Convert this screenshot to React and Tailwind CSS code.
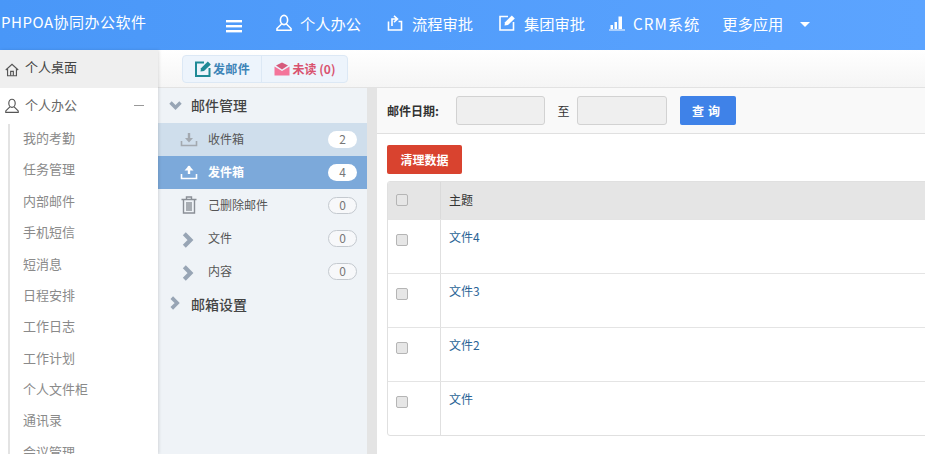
import React from "react";

const F = { fontFamily: '"Noto Sans CJK SC", "Open Sans", sans-serif' };

const Ic = ({ children, className = "", w = 18, h = 18, sw = 1.6 }) => (
  <svg width={w} height={h} viewBox="0 0 18 18" fill="none" stroke="currentColor" strokeWidth={sw} className={"shrink-0 " + className}>
    {children}
  </svg>
);
const User = (p) => (
  <Ic {...p}>
    <ellipse cx="9" cy="6" rx="3.6" ry="4.6" />
    <path d="M6.6 10 L2 14.5 V16.2 H16 V14.5 L11.4 10" />
  </Ic>
);
const Flow = (p) => (
  <Ic {...p}>
    <path d="M2.5 7.5 V16 H15.5 V7.5 H12.5" />
    <path d="M6 12 V5 H11 M8 1.8 L11.5 5 L8 8.2" />
  </Ic>
);
const Edit = (p) => (
  <Ic {...p}>
    <path d="M10 2.5 H2 V16 H15.5 V8" />
    <path d="M6.5 11.5 L7 8.2 L13.8 1.5 L16.8 4.4 L10 11 Z" fill="currentColor" stroke="none" />
  </Ic>
);
const Bars = (p) => (
  <Ic {...p} sw={0}>
    <path d="M1 15.5 H17 V16.5 H1 Z M2.5 11 H5 V15 H2.5 Z M6.5 8 H9 V15 H6.5 Z M10.5 2.5 H14 V15 H10.5 Z" fill="currentColor" />
  </Ic>
);
const Home = (p) => (
  <Ic {...p} sw={1.3}>
    <path d="M2 9 L9 2.5 L16 9 M4 8 V15.5 H14 V8" />
    <path d="M7.5 15.5 V10.5 H10.5 V15.5" />
  </Ic>
);
const Chev = ({ down, size = 13, className = "" }) => (
  <svg width={size} height={size} viewBox="0 0 13 13" className={"shrink-0 " + className} fill="none" stroke="#98a5b5" strokeWidth="3.4">
    {down ? <path d="M1.5 3.5 L6.5 8.5 L11.5 3.5" /> : <path d="M3.5 1.5 L8.5 6.5 L3.5 11.5" />}
  </svg>
);
const Tray = ({ up, color }) => (
  <svg width="18" height="16" viewBox="0 0 18 16" className="shrink-0" fill="none" stroke={color} strokeWidth="1.6">
    <path d="M1.5 10 V14.5 H16.5 V10" />
    <path d="M9 2 V10" strokeWidth="2.4" />
    {up ? <path d="M4.5 6.5 L9 1.5 L13.5 6.5 Z" fill={color} stroke="none" /> : <path d="M5 7 L9 11.5 L13 7 Z" fill={color} stroke="none" />}
  </svg>
);
const Trash = () => (
  <svg width="16" height="18" viewBox="0 0 16 18" className="shrink-0" fill="none" stroke="#8a8f96" strokeWidth="1.4">
    <path d="M0.5 3.5 H15.5 M5.5 3 V1 H10.5 V3 M2.5 4 V17 H13.5 V4 M6 6 V15 M8 6 V15 M10 6 V15" />
  </svg>
);

const navItems = [
  [User, "个人办公", "mr-[25px]", "gap-[7px]", ""],
  [Flow, "流程审批", "mr-[25px]", "gap-[8px]", ""],
  [Edit, "集团审批", "mr-[23px]", "gap-[8px]", ""],
  [Bars, "CRM系统", "mr-[22px]", "gap-[7px]", "tracking-[1px]"],
];
const subItems = ["我的考勤", "任务管理", "内部邮件", "手机短信", "短消息", "日程安排", "工作日志", "工作计划", "个人文件柜", "通讯录", "会议管理"];

const Badge = ({ n, strong }) => (
  <span
    className={
      "w-[29px] h-[17px] rounded-full flex items-center justify-center text-[12px] leading-none text-[#777] " +
      (strong ? "bg-white" : "border border-[#c4c9cf] bg-[#f7f8fa]")
    }
  >
    {n}
  </span>
);

const MailRow = ({ icon, label, n, cls = "", labelCls = "text-[#555]", strong }) => (
  <div className={"h-[33px] flex items-center pl-[22px] pr-[10px] pb-[1px] " + cls}>
    <span className="w-[28px] flex justify-start">{icon}</span>
    <span className={"flex-1 text-[12px] " + labelCls}>{label}</span>
    <Badge n={n} strong={strong} />
  </div>
);

const Box = () => <span className="block w-[12px] h-[12px] rounded-[2px] border border-[#b5b5b5] bg-[#e6e6e6]" />;

const rows = ["文件4", "文件3", "文件2", "文件"];

export default function App() {
  return (
    <div className="w-[925px] h-[454px] overflow-hidden flex flex-col bg-white" style={F}>
      <header className="h-[50px] shrink-0 flex items-center text-white bg-gradient-to-r from-[#4997f8] to-[#5ca4ff]">
        <div className="w-[226px] pl-[1px] pb-[5px] text-[15px] tracking-[0.5px] whitespace-nowrap">PHPOA协同办公软件</div>
        <svg width="16" height="13" viewBox="0 0 16 13" className="mt-[3px] shrink-0 mr-[33px]" fill="white">
          <rect y="0" width="16" height="2.4" />
          <rect y="5" width="16" height="2.4" />
          <rect y="10" width="16" height="2.4" />
        </svg>
        {navItems.map(([I, t, mr, gap, tr]) => (
          <div key={t} className={"flex items-center text-[15.25px] pb-[2px] " + mr + " " + gap}>
            <I className="text-white -mt-[3px]" />
            <span className={"-mt-[2px] " + tr}>{t}</span>
          </div>
        ))}
        <span className="text-[15.25px] mr-[17px] pb-[4px]">更多应用</span>
        <span className="w-0 h-0 border-x-[5px] border-x-transparent border-t-[5px] border-t-white mb-[2px]" />
      </header>

      <div className="flex flex-1 min-h-0">
        <aside className="w-[158px] shrink-0 bg-white shadow-[1px_0_3px_rgba(0,0,0,0.12)] z-10 overflow-hidden">
          <div className="h-[38px] bg-[#efefef] flex items-center pl-[4px] gap-[5px] text-[13px] text-[#444]">
            <Home className="text-[#555] mt-[1px]" w={16} h={16} />
            <span className="pb-[4px]">个人桌面</span>
          </div>
          <div className="h-[35px] flex items-center pl-[4px] pr-[14px] gap-[5px] text-[13px] text-[#666]">
            <User className="text-[#555]" w={16} h={16} sw={1.3} />
            <span className="flex-1 pb-[2px]">个人办公</span>
            <span className="w-[10px] h-px bg-[#999]" />
          </div>
          <ul className="ml-[8px] border-l-2 border-[#e3e3e3] pl-[13px] mt-[1px]">
            {subItems.map((s) => (
              <li key={s} className="h-[31.4px] flex items-center pb-[4px] text-[13px] text-[#8a8a8a]">
                {s}
              </li>
            ))}
          </ul>
        </aside>

        <main className="flex-1 min-w-0 flex flex-col">
          <div className="h-[38px] shrink-0 bg-gradient-to-b from-white to-[#f5f5f5] border-b border-[#e2e2e2] pl-[24px] pt-[5px]">
            <div className="inline-flex h-[28px] rounded-[4px] border border-[#dce8f5] bg-[#edf4fc] text-[12px] font-bold">
              <div className="w-[79px] flex items-center justify-center gap-[1px] border-r border-[#dce8f5] text-[#3d85b8]">
                <Edit className="text-[#1f8a96]" w={18} h={18} sw={2} />
                <span className="tracking-[0.3px]">发邮件</span>
              </div>
              <div className="w-[85px] flex items-center justify-center gap-[3px] text-[#d9536f]">
                <svg width="16" height="14" viewBox="0 0 16 14" className="shrink-0">
                  <path d="M0.5 4.5 L8 9 L15.5 4.5 V13.5 H0.5 Z" fill="#f4749a" />
                  <path d="M2 3.5 L8 0.5 L14 3.5 L8 7.5 Z" fill="#d65a7c" />
                </svg>
                未读 (0)
              </div>
            </div>
          </div>

          <div className="flex flex-1 min-h-0">
            <section className="w-[209px] shrink-0 bg-[#eff3f7] overflow-hidden">
              <div className="h-[35px] flex items-center pl-[11px] gap-[9px] text-[14px] font-medium text-[#444]">
                <Chev down />
                邮件管理
              </div>
              <MailRow icon={<Tray color="#a3a9b0" />} label="收件箱" n="2" cls="bg-[#cfdeec]" strong />
              <MailRow icon={<Tray up color="#ffffff" />} label="发件箱" n="4" cls="bg-[#7ca9da]" labelCls="text-white font-bold" strong />
              <MailRow icon={<span className="pl-[1px]"><Trash /></span>} label="己删除邮件" n="0" />
              <MailRow icon={<span className="pt-[3px]"><Chev size={16} /></span>} label="文件" n="0" />
              <MailRow icon={<span className="pt-[3px]"><Chev size={16} /></span>} label="内容" n="0" />
              <div className="h-[33px] flex items-center pl-[10px] gap-[9px] text-[14px] font-medium text-[#444]">
                <Chev size={14} className="-mt-[3px]" />
                邮箱设置
              </div>
            </section>

            <div className="w-[10px] shrink-0 bg-[#e4e4e4]" />

            <section className="flex-1 min-w-0 bg-white">
              <div className="h-[46px] flex items-center bg-[#f9f9f9] border-b border-[#e0e0e0] pl-[10px] text-[12px]">
                <span className="font-bold text-[#333] w-[69px]">邮件日期:</span>
                <span className="w-[89px] h-[29px] rounded-[3px] border border-[#d2d2d2] bg-[#efefef]" />
                <span className="w-[32px] text-center text-[#333] pl-[5px]">至</span>
                <span className="w-[90px] h-[29px] rounded-[3px] border border-[#d2d2d2] bg-[#efefef]" />
                <span className="ml-[13px] w-[56px] h-[29px] rounded-[2px] bg-[#3f82e8] text-white font-bold flex items-center justify-center tracking-[4px]">
                  查询
                </span>
              </div>
              <div className="pl-[10px] pt-[11px]">
                <div className="w-[75px] h-[29px] rounded-[2px] bg-[#d9432f] text-white font-bold text-[12px] flex items-center justify-center">
                  清理数据
                </div>
                <div className="mt-[7px] w-[560px] border border-[#e0e0e0] rounded-[3px] overflow-hidden">
                  <div className="h-[37px] flex bg-[#e5e5e5] text-[12px] text-[#333]">
                    <div className="w-[53px] flex items-center pl-[8px] pb-[2px] border-r border-[#dadada]">
                      <Box />
                    </div>
                    <div className="flex-1 flex items-center pl-[8px] pb-[2px]">主题</div>
                  </div>
                  {rows.map((r) => (
                    <div key={r} className="h-[54px] flex border-t border-[#e4e4e4] text-[12px] text-[#2a6496]">
                      <div className="w-[53px] flex pt-[14px] pl-[8px] border-r border-[#e0e0e0]">
                        <Box />
                      </div>
                      <div className="flex-1 pl-[8px] pt-[8px]">{r}</div>
                    </div>
                  ))}
                </div>
              </div>
            </section>
          </div>
        </main>
      </div>
    </div>
  );
}
